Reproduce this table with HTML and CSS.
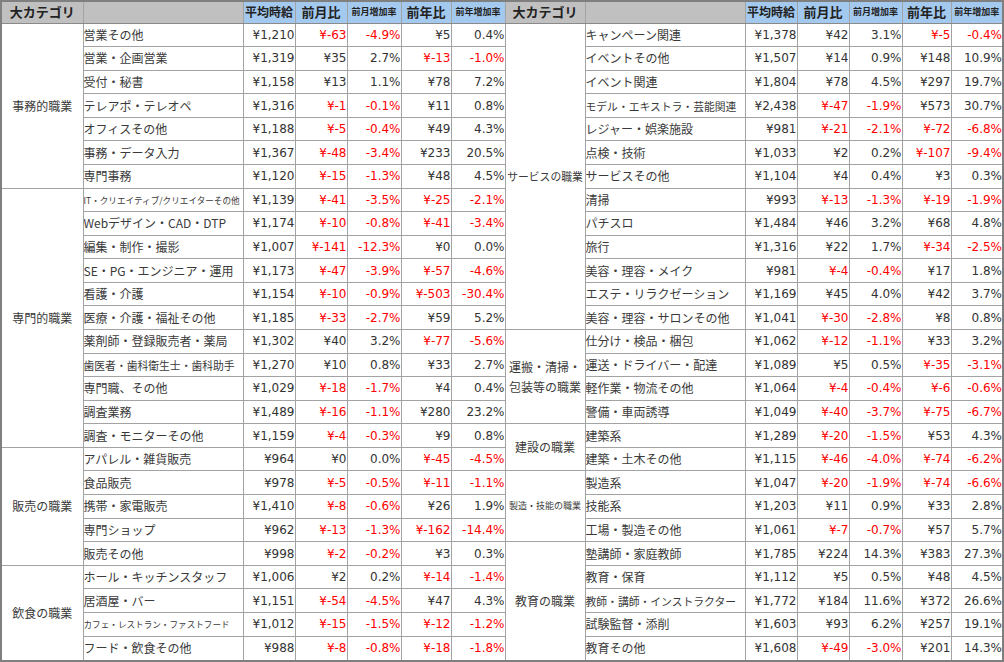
FILE: index.html
```html
<!DOCTYPE html>
<html lang="ja">
<head>
<meta charset="utf-8">
<link rel="stylesheet" href="styles.css">
</head>
<body>
<div class="frame">
<table class="wage">
<colgroup>
<col class="c-cat"><col class="c-name"><col class="c-n52"><col class="c-n52"><col class="c-n54"><col class="c-n50"><col class="c-n54">
<col class="c-cat2"><col class="c-name"><col class="c-n52"><col class="c-n52"><col class="c-n53"><col class="c-n49"><col class="c-n51">
</colgroup>
<thead>
<tr>
<th class="h-gray h-cat">大カテゴリ</th><th class="h-gray"></th><th class="h-blue h-m">平均時給</th><th class="h-blue h-l">前月比</th><th class="h-blue h-s">前月増加率</th><th class="h-blue h-l">前年比</th><th class="h-blue h-s">前年増加率</th>
<th class="h-gray h-cat">大カテゴリ</th><th class="h-gray"></th><th class="h-blue h-m">平均時給</th><th class="h-blue h-l">前月比</th><th class="h-blue h-s">前月増加率</th><th class="h-blue h-l">前年比</th><th class="h-blue h-s">前年増加率</th>
</tr>
</thead>
<tbody>
<tr>
<td class="cat" rowspan="7">事務的職業</td><td class="name">営業その他</td><td class="num">¥1,210</td><td class="num neg">¥-63</td><td class="num neg">-4.9%</td><td class="num">¥5</td><td class="num">0.4%</td>
<td class="cat cat-sm" rowspan="13">サービスの職業</td><td class="name">キャンペーン関連</td><td class="num">¥1,378</td><td class="num">¥42</td><td class="num">3.1%</td><td class="num neg">¥-5</td><td class="num neg">-0.4%</td>
</tr>
<tr>
<td class="name">営業・企画営業</td><td class="num">¥1,319</td><td class="num">¥35</td><td class="num">2.7%</td><td class="num neg">¥-13</td><td class="num neg">-1.0%</td>
<td class="name">イベントその他</td><td class="num">¥1,507</td><td class="num">¥14</td><td class="num">0.9%</td><td class="num">¥148</td><td class="num">10.9%</td>
</tr>
<tr>
<td class="name">受付・秘書</td><td class="num">¥1,158</td><td class="num">¥13</td><td class="num">1.1%</td><td class="num">¥78</td><td class="num">7.2%</td>
<td class="name">イベント関連</td><td class="num">¥1,804</td><td class="num">¥78</td><td class="num">4.5%</td><td class="num">¥297</td><td class="num">19.7%</td>
</tr>
<tr>
<td class="name">テレアポ・テレオペ</td><td class="num">¥1,316</td><td class="num neg">¥-1</td><td class="num neg">-0.1%</td><td class="num">¥11</td><td class="num">0.8%</td>
<td class="name name-sm">モデル・エキストラ・芸能関連</td><td class="num">¥2,438</td><td class="num neg">¥-47</td><td class="num neg">-1.9%</td><td class="num">¥573</td><td class="num">30.7%</td>
</tr>
<tr>
<td class="name">オフィスその他</td><td class="num">¥1,188</td><td class="num neg">¥-5</td><td class="num neg">-0.4%</td><td class="num">¥49</td><td class="num">4.3%</td>
<td class="name">レジャー・娯楽施設</td><td class="num">¥981</td><td class="num neg">¥-21</td><td class="num neg">-2.1%</td><td class="num neg">¥-72</td><td class="num neg">-6.8%</td>
</tr>
<tr>
<td class="name">事務・データ入力</td><td class="num">¥1,367</td><td class="num neg">¥-48</td><td class="num neg">-3.4%</td><td class="num">¥233</td><td class="num">20.5%</td>
<td class="name">点検・技術</td><td class="num">¥1,033</td><td class="num">¥2</td><td class="num">0.2%</td><td class="num neg">¥-107</td><td class="num neg">-9.4%</td>
</tr>
<tr>
<td class="name">専門事務</td><td class="num">¥1,120</td><td class="num neg">¥-15</td><td class="num neg">-1.3%</td><td class="num">¥48</td><td class="num">4.5%</td>
<td class="name">サービスその他</td><td class="num">¥1,104</td><td class="num">¥4</td><td class="num">0.4%</td><td class="num">¥3</td><td class="num">0.3%</td>
</tr>
<tr>
<td class="cat" rowspan="11">専門的職業</td><td class="name name-xs">IT・クリエイティブ/クリエイターその他</td><td class="num">¥1,139</td><td class="num neg">¥-41</td><td class="num neg">-3.5%</td><td class="num neg">¥-25</td><td class="num neg">-2.1%</td>
<td class="name">清掃</td><td class="num">¥993</td><td class="num neg">¥-13</td><td class="num neg">-1.3%</td><td class="num neg">¥-19</td><td class="num neg">-1.9%</td>
</tr>
<tr>
<td class="name">Webデザイン・CAD・DTP</td><td class="num">¥1,174</td><td class="num neg">¥-10</td><td class="num neg">-0.8%</td><td class="num neg">¥-41</td><td class="num neg">-3.4%</td>
<td class="name">パチスロ</td><td class="num">¥1,484</td><td class="num">¥46</td><td class="num">3.2%</td><td class="num">¥68</td><td class="num">4.8%</td>
</tr>
<tr>
<td class="name">編集・制作・撮影</td><td class="num">¥1,007</td><td class="num neg">¥-141</td><td class="num neg">-12.3%</td><td class="num">¥0</td><td class="num">0.0%</td>
<td class="name">旅行</td><td class="num">¥1,316</td><td class="num">¥22</td><td class="num">1.7%</td><td class="num neg">¥-34</td><td class="num neg">-2.5%</td>
</tr>
<tr>
<td class="name">SE・PG・エンジニア・運用</td><td class="num">¥1,173</td><td class="num neg">¥-47</td><td class="num neg">-3.9%</td><td class="num neg">¥-57</td><td class="num neg">-4.6%</td>
<td class="name">美容・理容・メイク</td><td class="num">¥981</td><td class="num neg">¥-4</td><td class="num neg">-0.4%</td><td class="num">¥17</td><td class="num">1.8%</td>
</tr>
<tr>
<td class="name">看護・介護</td><td class="num">¥1,154</td><td class="num neg">¥-10</td><td class="num neg">-0.9%</td><td class="num neg">¥-503</td><td class="num neg">-30.4%</td>
<td class="name">エステ・リラクゼーション</td><td class="num">¥1,169</td><td class="num">¥45</td><td class="num">4.0%</td><td class="num">¥42</td><td class="num">3.7%</td>
</tr>
<tr>
<td class="name">医療・介護・福祉その他</td><td class="num">¥1,185</td><td class="num neg">¥-33</td><td class="num neg">-2.7%</td><td class="num">¥59</td><td class="num">5.2%</td>
<td class="name">美容・理容・サロンその他</td><td class="num">¥1,041</td><td class="num neg">¥-30</td><td class="num neg">-2.8%</td><td class="num">¥8</td><td class="num">0.8%</td>
</tr>
<tr>
<td class="name">薬剤師・登録販売者・薬局</td><td class="num">¥1,302</td><td class="num">¥40</td><td class="num">3.2%</td><td class="num neg">¥-77</td><td class="num neg">-5.6%</td>
<td class="cat" rowspan="4">運搬・清掃・<br>包装等の職業</td><td class="name">仕分け・検品・梱包</td><td class="num">¥1,062</td><td class="num neg">¥-12</td><td class="num neg">-1.1%</td><td class="num">¥33</td><td class="num">3.2%</td>
</tr>
<tr>
<td class="name name-sm">歯医者・歯科衛生士・歯科助手</td><td class="num">¥1,270</td><td class="num">¥10</td><td class="num">0.8%</td><td class="num">¥33</td><td class="num">2.7%</td>
<td class="name">運送・ドライバー・配達</td><td class="num">¥1,089</td><td class="num">¥5</td><td class="num">0.5%</td><td class="num neg">¥-35</td><td class="num neg">-3.1%</td>
</tr>
<tr>
<td class="name">専門職、その他</td><td class="num">¥1,029</td><td class="num neg">¥-18</td><td class="num neg">-1.7%</td><td class="num">¥4</td><td class="num">0.4%</td>
<td class="name">軽作業・物流その他</td><td class="num">¥1,064</td><td class="num neg">¥-4</td><td class="num neg">-0.4%</td><td class="num neg">¥-6</td><td class="num neg">-0.6%</td>
</tr>
<tr>
<td class="name">調査業務</td><td class="num">¥1,489</td><td class="num neg">¥-16</td><td class="num neg">-1.1%</td><td class="num">¥280</td><td class="num">23.2%</td>
<td class="name">警備・車両誘導</td><td class="num">¥1,049</td><td class="num neg">¥-40</td><td class="num neg">-3.7%</td><td class="num neg">¥-75</td><td class="num neg">-6.7%</td>
</tr>
<tr>
<td class="name">調査・モニターその他</td><td class="num">¥1,159</td><td class="num neg">¥-4</td><td class="num neg">-0.3%</td><td class="num">¥9</td><td class="num">0.8%</td>
<td class="cat" rowspan="2">建設の職業</td><td class="name">建築系</td><td class="num">¥1,289</td><td class="num neg">¥-20</td><td class="num neg">-1.5%</td><td class="num">¥53</td><td class="num">4.3%</td>
</tr>
<tr>
<td class="cat" rowspan="5">販売の職業</td><td class="name">アパレル・雑貨販売</td><td class="num">¥964</td><td class="num">¥0</td><td class="num">0.0%</td><td class="num neg">¥-45</td><td class="num neg">-4.5%</td>
<td class="name">建築・土木その他</td><td class="num">¥1,115</td><td class="num neg">¥-46</td><td class="num neg">-4.0%</td><td class="num neg">¥-74</td><td class="num neg">-6.2%</td>
</tr>
<tr>
<td class="name">食品販売</td><td class="num">¥978</td><td class="num neg">¥-5</td><td class="num neg">-0.5%</td><td class="num neg">¥-11</td><td class="num neg">-1.1%</td>
<td class="cat cat-xs" rowspan="3">製造・技能の職業</td><td class="name">製造系</td><td class="num">¥1,047</td><td class="num neg">¥-20</td><td class="num neg">-1.9%</td><td class="num neg">¥-74</td><td class="num neg">-6.6%</td>
</tr>
<tr>
<td class="name">携帯・家電販売</td><td class="num">¥1,410</td><td class="num neg">¥-8</td><td class="num neg">-0.6%</td><td class="num">¥26</td><td class="num">1.9%</td>
<td class="name">技能系</td><td class="num">¥1,203</td><td class="num">¥11</td><td class="num">0.9%</td><td class="num">¥33</td><td class="num">2.8%</td>
</tr>
<tr>
<td class="name">専門ショップ</td><td class="num">¥962</td><td class="num neg">¥-13</td><td class="num neg">-1.3%</td><td class="num neg">¥-162</td><td class="num neg">-14.4%</td>
<td class="name">工場・製造その他</td><td class="num">¥1,061</td><td class="num neg">¥-7</td><td class="num neg">-0.7%</td><td class="num">¥57</td><td class="num">5.7%</td>
</tr>
<tr>
<td class="name">販売その他</td><td class="num">¥998</td><td class="num neg">¥-2</td><td class="num neg">-0.2%</td><td class="num">¥3</td><td class="num">0.3%</td>
<td class="cat" rowspan="5">教育の職業</td><td class="name">塾講師・家庭教師</td><td class="num">¥1,785</td><td class="num">¥224</td><td class="num">14.3%</td><td class="num">¥383</td><td class="num">27.3%</td>
</tr>
<tr>
<td class="cat" rowspan="4">飲食の職業</td><td class="name">ホール・キッチンスタッフ</td><td class="num">¥1,006</td><td class="num">¥2</td><td class="num">0.2%</td><td class="num neg">¥-14</td><td class="num neg">-1.4%</td>
<td class="name">教育・保育</td><td class="num">¥1,112</td><td class="num">¥5</td><td class="num">0.5%</td><td class="num">¥48</td><td class="num">4.5%</td>
</tr>
<tr>
<td class="name">居酒屋・バー</td><td class="num">¥1,151</td><td class="num neg">¥-54</td><td class="num neg">-4.5%</td><td class="num">¥47</td><td class="num">4.3%</td>
<td class="name name-sm">教師・講師・インストラクター</td><td class="num">¥1,772</td><td class="num">¥184</td><td class="num">11.6%</td><td class="num">¥372</td><td class="num">26.6%</td>
</tr>
<tr>
<td class="name name-xs">カフェ・レストラン・ファストフード</td><td class="num">¥1,012</td><td class="num neg">¥-15</td><td class="num neg">-1.5%</td><td class="num neg">¥-12</td><td class="num neg">-1.2%</td>
<td class="name">試験監督・添削</td><td class="num">¥1,603</td><td class="num">¥93</td><td class="num">6.2%</td><td class="num">¥257</td><td class="num">19.1%</td>
</tr>
<tr>
<td class="name">フード・飲食その他</td><td class="num">¥988</td><td class="num neg">¥-8</td><td class="num neg">-0.8%</td><td class="num neg">¥-18</td><td class="num neg">-1.8%</td>
<td class="name">教育その他</td><td class="num">¥1,608</td><td class="num neg">¥-49</td><td class="num neg">-3.0%</td><td class="num">¥201</td><td class="num">14.3%</td>
</tr>
</tbody>
</table>
</div>
</body>
</html>
```

FILE: styles.css
```css
html, body {
  margin: 0;
  padding: 0;
  background: #ffffff;
}

.frame {
  width: 1004px;
  height: 662px;
  box-sizing: border-box;
  border: 2px solid #7f7f7f;
  overflow: hidden;
  background: #ffffff;
}

.wage {
  width: 1000px;
  table-layout: fixed;
  border-collapse: collapse;
  border-style: hidden;
  font-family: "Noto Sans CJK JP", "DejaVu Sans", sans-serif;
  color: #3a3a3a;
}

.c-cat { width: 81px; }
.c-cat2 { width: 80px; }
.c-name { width: 160px; }
.c-n49 { width: 49px; }
.c-n50 { width: 50px; }
.c-n51 { width: 51px; }
.c-n52 { width: 52px; }
.c-n53 { width: 53px; }
.c-n54 { width: 54px; }

.wage th,
.wage td {
  border: 1px solid #a3a3a3;
  padding: 0;
  overflow: hidden;
  white-space: nowrap;
  vertical-align: middle;
}

.wage thead tr {
  height: 21px;
}

.wage tbody tr {
  height: 23.59px;
}

.wage th {
  font-weight: bold;
  color: #222222;
  text-align: center;
  line-height: 14px;
  border-bottom-color: #8a8a8a;
}

.h-gray {
  background: #c0c0c0;
}

.h-blue {
  background: #a3c9ef;
}

.h-cat {
  font-size: 13px;
}

.h-m {
  font-size: 12px;
}

.h-l {
  font-size: 13px;
}

.h-s {
  font-size: 9px;
}

.cat {
  text-align: center;
  font-size: 12px;
  line-height: 20px;
  white-space: normal;
}

.cat-sm {
  font-size: 10.8px;
  white-space: nowrap;
}

.cat-xs {
  font-size: 9px;
}

.name {
  text-align: left;
  padding-left: 5px;
  font-size: 12px;
  line-height: 16px;
}

.name-sm {
  font-size: 10.8px;
  padding-left: 4px;
}

.name-xs {
  font-size: 8.6px;
  padding-left: 4px;
}

.num {
  text-align: right;
  padding-right: 3px;
  font-family: "DejaVu Sans", "Noto Sans CJK JP", sans-serif;
  font-size: 12px;
  line-height: 16px;
  color: #333333;
}

.wage td.neg {
  color: #ff0000;
}
```
